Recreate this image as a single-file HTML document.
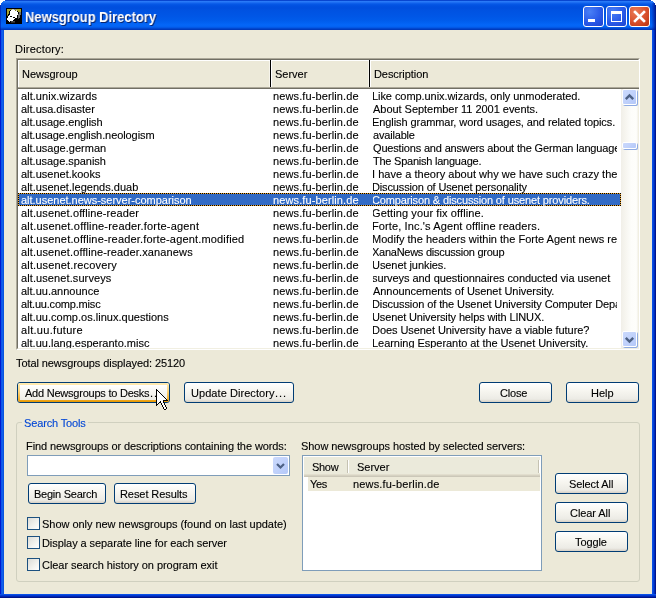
<!DOCTYPE html>
<html><head><meta charset="utf-8"><title>Newsgroup Directory</title>
<style>
html,body{margin:0;padding:0;background:#fff;}
body{width:656px;height:598px;overflow:hidden;position:relative;font-family:"Liberation Sans",sans-serif;font-size:11px;color:#000;line-height:13px;}
*{box-sizing:border-box;}
.abs{position:absolute;}
.t{position:absolute;white-space:nowrap;line-height:13px;height:13px;color:#000;will-change:transform;-webkit-text-stroke:0.12px currentColor;}
.t.w{color:#fff;}
.t.st{color:#0046d5;}
#win{position:absolute;left:0;top:0;width:656px;height:598px;background:#0855dd;overflow:hidden;}
#title{position:absolute;left:0;top:0;width:656px;height:30px;background:linear-gradient(180deg,#0846d0 0px,#0846d0 1px,#2d7ffa 1px,#2474f4 2px,#1466ee 3px,#0658e6 4px,#0050e0 6px,#004edd 8px,#0053e2 11px,#0056e6 16px,#005bea 20px,#0262f2 23px,#0467f8 25px,#0461f0 27px,#0250dc 28px,#0040c4 29px,#0034b4 30px);}
#ttext{position:absolute;transform-origin:0 0;font:bold 14px "Liberation Sans",sans-serif;color:#fff;text-shadow:1px 1px 0 #0a246a;white-space:nowrap;line-height:16px;will-change:transform;}
#bl{position:absolute;left:0;top:30px;width:4px;height:568px;background:linear-gradient(90deg,#0019cf 0,#0019cf 1px,#0a50e8 1px,#1263ee 3px,#0855dd 3px);}
#br{position:absolute;left:652px;top:30px;width:4px;height:568px;background:linear-gradient(90deg,#0a4fe4 0,#0a4fe4 1px,#0440d6 1px,#0440d6 2px,#002cbc 2px,#002cbc 3px,#00148e 3px);}
#bb{position:absolute;left:0;top:594px;width:656px;height:4px;background:linear-gradient(180deg,#0a50e6 0,#0a50e6 1px,#0238d2 1px,#0238d2 2px,#0026b2 2px,#0026b2 3px,#001388 3px);}
#client{position:absolute;left:4px;top:30px;width:648px;height:564px;background:#ece9d8;}
.cb{position:absolute;top:6px;width:21px;height:21px;border:1px solid #fff;border-radius:3px;}
.cbb{background:radial-gradient(circle at 30% 25%,#4a80f6 0%,#2a5ae8 55%,#1c42d0 100%);}
.cbr{background:radial-gradient(circle at 30% 25%,#ea7a56 0%,#d8502c 55%,#b8320e 100%);}
.btn{position:absolute;height:21px;border:1px solid #003c74;border-radius:3px;background:linear-gradient(180deg,#ffffff 0%,#f6f5ef 45%,#ecebe5 85%,#d6d0c5 100%);}
.btn.def::before{content:"";position:absolute;left:0;top:0;right:0;bottom:0;border-radius:2px;background:linear-gradient(180deg,#ffecb4 0%,#fdd47c 45%,#f3b030 85%,#e59700 100%);}
.btn.def::after{content:"";position:absolute;left:2px;top:2px;right:2px;bottom:2px;background:linear-gradient(180deg,#ffffff 0%,#f7f6f1 50%,#eeede6 100%);}
#list{position:absolute;left:16px;top:58px;width:624px;height:292px;border-top:1px solid #aca899;border-left:1px solid #aca899;border-right:1px solid #fff;border-bottom:1px solid #fff;}
#list2{position:absolute;left:0;top:0;width:622px;height:290px;border-top:1px solid #716f64;border-left:1px solid #716f64;border-right:1px solid #f1efe2;border-bottom:1px solid #f1efe2;background:#fff;overflow:hidden;}
#hdr{position:absolute;left:0;top:0;width:620px;height:29px;background:#ece9d8;border-top:1px solid #fff;border-bottom:1px solid #716f64;box-shadow:inset 0 -1px 0 #aca899;}
#rows{position:absolute;left:18px;top:89px;width:603px;height:259px;overflow:hidden;}
#selrow{position:absolute;left:0;top:104px;width:603px;height:13px;background:repeating-linear-gradient(90deg,#000 0 1px,#eda32c 1px 2px) 0 0/100% 1px no-repeat,repeating-linear-gradient(90deg,#000 0 1px,#eda32c 1px 2px) 0 100%/100% 1px no-repeat,repeating-linear-gradient(180deg,#000 0 1px,#eda32c 1px 2px) 0 0/1px 100% no-repeat,repeating-linear-gradient(180deg,#000 0 1px,#eda32c 1px 2px) 100% 0/1px 100% no-repeat,#316ac5;}
#dcol{position:absolute;left:355px;top:0;width:244px;height:259px;overflow:hidden;}
#sb{position:absolute;left:603px;top:29px;width:17px;height:259px;background:linear-gradient(90deg,#f1efe8 0%,#f6f5ef 25%,#fdfdfa 60%,#fefefb 90%,#f3f2ea 100%);}
.sbb{position:absolute;left:1px;width:15px;height:16px;border:1px solid #fff;border-radius:2px;background:linear-gradient(135deg,#cbd9fc 0%,#c1d2fb 50%,#b4c8f8 100%);box-shadow:1px 1px 0 #8fabe2;}
.grp{position:absolute;border:1px solid #d0d0bf;border-radius:3px;}
.chk{position:absolute;left:27px;width:13px;height:13px;border:1px solid #1c5180;background:linear-gradient(135deg,#dcdcd7 0%,#f3f3ef 60%,#ffffff 100%);}
#combo{position:absolute;left:27px;top:455px;width:263px;height:21px;border:1px solid #7f9db9;background:#fff;}
#slist{position:absolute;left:302px;top:455px;width:240px;height:116px;border:1px solid #7f9db9;background:#fff;}
</style></head><body>
<div id="win">
<div id="title"></div><div class="abs" style="left:652px;top:3px;width:4px;height:27px;background:linear-gradient(90deg,rgba(0,30,170,.15) 0,rgba(0,24,150,.55) 50%,rgba(0,14,120,.9) 100%)"></div><div class="abs" style="left:0;top:5px;width:1px;height:25px;background:rgba(0,20,160,.55)"></div>
<svg class="abs" style="left:0;top:0" width="8" height="8" shape-rendering="crispEdges"><path d="M0 0H5V1H3V2H2V3H1V5H0Z" fill="#fff"/></svg>
<svg class="abs" style="left:648px;top:0" width="8" height="8" shape-rendering="crispEdges"><path d="M8 0H3V1H5V2H6V3H7V5H8Z" fill="#fff"/></svg>
<svg class="abs" style="left:6px;top:8px" width="16" height="16" viewBox="0 0 16 16" shape-rendering="crispEdges"><rect width="16" height="16" fill="#000"/><rect x="1" y="1" width="5" height="1" fill="#a8a432"/><rect x="6" y="1" width="2" height="1" fill="#c8c8c8"/><rect x="8" y="1" width="2" height="1" fill="#888"/><rect x="10" y="1" width="5" height="1" fill="#a8a432"/><rect x="1" y="2" width="3" height="1" fill="#a8a432"/><rect x="5" y="2" width="4" height="1" fill="#fff"/><rect x="9" y="2" width="1" height="1" fill="#8a8a10"/><rect x="10" y="2" width="1" height="1" fill="#ddd"/><rect x="11" y="2" width="4" height="1" fill="#a8a432"/><rect x="1" y="3" width="2" height="1" fill="#a8a432"/><rect x="4" y="3" width="7" height="1" fill="#fff"/><rect x="12" y="3" width="3" height="1" fill="#a8a432"/><rect x="1" y="4" width="2" height="1" fill="#a8a432"/><rect x="4" y="4" width="8" height="1" fill="#fff"/><rect x="13" y="4" width="2" height="1" fill="#6e6e6e"/><rect x="1" y="5" width="2" height="1" fill="#a8a432"/><rect x="4" y="5" width="8" height="1" fill="#fff"/><rect x="13" y="5" width="2" height="1" fill="#6e6e6e"/><rect x="1" y="6" width="1" height="1" fill="#a8a432"/><rect x="4" y="6" width="8" height="1" fill="#fff"/><rect x="12" y="6" width="3" height="1" fill="#6e6e6e"/><rect x="1" y="7" width="1" height="1" fill="#6a6820"/><rect x="3" y="7" width="8" height="1" fill="#fff"/><rect x="12" y="7" width="2" height="1" fill="#6e6e6e"/><rect x="2" y="8" width="2" height="1" fill="#fff"/><rect x="6" y="8" width="5" height="1" fill="#fff"/><rect x="12" y="8" width="2" height="1" fill="#6e6e6e"/><rect x="2" y="9" width="5" height="1" fill="#fff"/><rect x="9" y="9" width="2" height="1" fill="#fff"/><rect x="12" y="9" width="2" height="1" fill="#6e6e6e"/><rect x="1" y="10" width="8" height="1" fill="#fff"/><rect x="12" y="10" width="1" height="1" fill="#4a4a4a"/><rect x="1" y="11" width="7" height="1" fill="#fff"/><rect x="2" y="12" width="5" height="1" fill="#fff"/><rect x="3" y="13" width="1" height="1" fill="#fff"/><rect x="5" y="13" width="4" height="1" fill="#4a4a4a"/><rect x="5" y="14" width="4" height="1" fill="#2a2a2a"/></svg>
<div id="ttext" style="left:24.5px;top:9px;transform:scaleX(0.926)">Newsgroup Directory</div>
<div class="cb cbb" style="left:583px"><div class="abs" style="left:4px;top:12px;width:7px;height:3px;background:#fff"></div></div>
<div class="cb cbb" style="left:606px"><div class="abs" style="left:4px;top:4px;width:11px;height:11px;border:1px solid #fff;border-top-width:3px"></div></div>
<div class="cb cbr" style="left:629px"><svg class="abs" style="left:0;top:0" width="19" height="19"><path d="M5 5L14 14M14 5L5 14" stroke="#fff" stroke-width="2.6" stroke-linecap="square"/></svg></div>
<div id="client"></div>
<div id="bl"></div><div id="br"></div><div id="bb"></div>

<div id="lDir" class="t" style="left:14.50px;top:43px;letter-spacing:0.200px">Directory:</div>

<div id="list"><div id="list2">
<div id="hdr"></div>
<div class="abs" style="left:0;top:0;width:1px;height:27px;background:#fff"></div>
<div class="abs" style="left:251px;top:1px;width:1px;height:26px;background:#f6f4ec"></div><div class="abs" style="left:252px;top:0;width:1px;height:27px;background:#000"></div><div class="abs" style="left:253px;top:1px;width:1px;height:26px;background:#fff"></div>
<div class="abs" style="left:350px;top:1px;width:1px;height:26px;background:#f6f4ec"></div><div class="abs" style="left:351px;top:0;width:1px;height:27px;background:#000"></div><div class="abs" style="left:352px;top:1px;width:1px;height:26px;background:#fff"></div>
<div id="sb">
<div class="sbb" style="top:0;height:16px"><svg class="abs" style="left:0;top:0" width="13" height="14"><path d="M2.8 9.2L6.5 5.5L10.2 9.2" stroke="#4d6185" stroke-width="2.4" fill="none"/></svg></div>
<div class="sbb" style="top:53px;height:7px"></div>
<div class="sbb" style="top:242px;height:16px"><svg class="abs" style="left:0;top:0" width="13" height="14"><path d="M2.8 5.8L6.5 9.5L10.2 5.8" stroke="#4d6185" stroke-width="2.4" fill="none"/></svg></div>
</div>
</div><div class="abs" style="left:621px;top:1px;width:1px;height:29px;background:#ece9d8;border-top:1px solid #fff;border-bottom:1px solid #716f64;box-shadow:inset 0 -1px 0 #aca899"></div></div>
<div id="hN" class="t" style="left:21.50px;top:68px;letter-spacing:0.000px">Newsgroup</div><div id="hS" class="t" style="left:274.50px;top:68px;letter-spacing:0.000px">Server</div><div id="hD" class="t" style="left:373.50px;top:68px;letter-spacing:-0.072px">Description</div>
<div id="rows">
<div id="selrow"></div>
<div id="n0" class="t" style="left:2.50px;top:1px;letter-spacing:0.048px">alt.unix.wizards</div>
<div id="s0" class="t" style="left:254.50px;top:1px;letter-spacing:0.113px">news.fu-berlin.de</div>
<div id="n1" class="t" style="left:2.50px;top:14px;letter-spacing:-0.012px">alt.usa.disaster</div>
<div id="s1" class="t" style="left:254.50px;top:14px;letter-spacing:0.113px">news.fu-berlin.de</div>
<div id="n2" class="t" style="left:2.50px;top:27px;letter-spacing:-0.056px">alt.usage.english</div>
<div id="s2" class="t" style="left:254.50px;top:27px;letter-spacing:0.113px">news.fu-berlin.de</div>
<div id="n3" class="t" style="left:2.50px;top:40px;letter-spacing:-0.083px">alt.usage.english.neologism</div>
<div id="s3" class="t" style="left:254.50px;top:40px;letter-spacing:0.113px">news.fu-berlin.de</div>
<div id="n4" class="t" style="left:2.50px;top:53px;letter-spacing:0.012px">alt.usage.german</div>
<div id="s4" class="t" style="left:254.50px;top:53px;letter-spacing:0.113px">news.fu-berlin.de</div>
<div id="n5" class="t" style="left:2.50px;top:66px;letter-spacing:-0.044px">alt.usage.spanish</div>
<div id="s5" class="t" style="left:254.50px;top:66px;letter-spacing:0.113px">news.fu-berlin.de</div>
<div id="n6" class="t" style="left:2.50px;top:79px;letter-spacing:0.000px">alt.usenet.kooks</div>
<div id="s6" class="t" style="left:254.50px;top:79px;letter-spacing:0.113px">news.fu-berlin.de</div>
<div id="n7" class="t" style="left:2.50px;top:92px;letter-spacing:0.025px">alt.usenet.legends.duab</div>
<div id="s7" class="t" style="left:254.50px;top:92px;letter-spacing:0.113px">news.fu-berlin.de</div>
<div id="n8" class="t w" style="left:2.50px;top:105px;letter-spacing:-0.016px">alt.usenet.news-server-comparison</div>
<div id="s8" class="t w" style="left:254.50px;top:105px;letter-spacing:0.113px">news.fu-berlin.de</div>
<div id="n9" class="t" style="left:2.50px;top:118px;letter-spacing:0.105px">alt.usenet.offline-reader</div>
<div id="s9" class="t" style="left:254.50px;top:118px;letter-spacing:0.113px">news.fu-berlin.de</div>
<div id="n10" class="t" style="left:2.50px;top:131px;letter-spacing:0.192px">alt.usenet.offline-reader.forte-agent</div>
<div id="s10" class="t" style="left:254.50px;top:131px;letter-spacing:0.113px">news.fu-berlin.de</div>
<div id="n11" class="t" style="left:2.50px;top:144px;letter-spacing:0.168px">alt.usenet.offline-reader.forte-agent.modified</div>
<div id="s11" class="t" style="left:254.50px;top:144px;letter-spacing:0.113px">news.fu-berlin.de</div>
<div id="n12" class="t" style="left:2.50px;top:157px;letter-spacing:0.130px">alt.usenet.offline-reader.xananews</div>
<div id="s12" class="t" style="left:254.50px;top:157px;letter-spacing:0.113px">news.fu-berlin.de</div>
<div id="n13" class="t" style="left:2.50px;top:170px;letter-spacing:0.160px">alt.usenet.recovery</div>
<div id="s13" class="t" style="left:254.50px;top:170px;letter-spacing:0.113px">news.fu-berlin.de</div>
<div id="n14" class="t" style="left:2.50px;top:183px;letter-spacing:0.096px">alt.usenet.surveys</div>
<div id="s14" class="t" style="left:254.50px;top:183px;letter-spacing:0.113px">news.fu-berlin.de</div>
<div id="n15" class="t" style="left:2.50px;top:196px;letter-spacing:0.000px">alt.uu.announce</div>
<div id="s15" class="t" style="left:254.50px;top:196px;letter-spacing:0.113px">news.fu-berlin.de</div>
<div id="n16" class="t" style="left:2.50px;top:209px;letter-spacing:-0.192px">alt.uu.comp.misc</div>
<div id="s16" class="t" style="left:254.50px;top:209px;letter-spacing:0.113px">news.fu-berlin.de</div>
<div id="n17" class="t" style="left:2.50px;top:222px;letter-spacing:0.012px">alt.uu.comp.os.linux.questions</div>
<div id="s17" class="t" style="left:254.50px;top:222px;letter-spacing:0.113px">news.fu-berlin.de</div>
<div id="n18" class="t" style="left:2.50px;top:235px;letter-spacing:0.300px">alt.uu.future</div>
<div id="s18" class="t" style="left:254.50px;top:235px;letter-spacing:0.113px">news.fu-berlin.de</div>
<div id="n19" class="t" style="left:2.50px;top:248px;letter-spacing:0.000px">alt.uu.lang.esperanto.misc</div>
<div id="s19" class="t" style="left:254.50px;top:248px;letter-spacing:0.113px">news.fu-berlin.de</div>
<div id="dcol">
<div id="d0" class="t" style="left:-1.50px;top:1px;letter-spacing:-0.063px">Like comp.unix.wizards, only unmoderated.</div>
<div id="d1" class="t" style="left:-0.50px;top:14px;letter-spacing:-0.036px">About September 11 2001 events.</div>
<div id="d2" class="t" style="left:-1.50px;top:27px;letter-spacing:-0.078px">English grammar, word usages, and related topics.</div>
<div id="d3" class="t" style="left:-0.50px;top:40px;letter-spacing:-0.181px">available</div>
<div id="d4" class="t" style="left:-0.50px;top:53px;letter-spacing:-0.168px">Questions and answers about the German language</div>
<div id="d5" class="t" style="left:-0.50px;top:66px;letter-spacing:-0.234px">The Spanish language.</div>
<div id="d6" class="t" style="left:-1.50px;top:79px;letter-spacing:0.031px">I have a theory about why we have such crazy theories</div>
<div id="d7" class="t" style="left:-1.50px;top:92px;letter-spacing:-0.145px">Discussion of Usenet personality</div>
<div id="d8" class="t w" style="left:-1.50px;top:105px;letter-spacing:-0.138px">Comparison &amp; discussion of usenet providers.</div>
<div id="d9" class="t" style="left:-1.50px;top:118px;letter-spacing:0.104px">Getting your fix offline.</div>
<div id="d10" class="t" style="left:-1.50px;top:131px;letter-spacing:0.117px">Forte, Inc.'s Agent offline readers.</div>
<div id="d11" class="t" style="left:-1.50px;top:144px;letter-spacing:0.010px">Modify the headers within the Forte Agent news reader</div>
<div id="d12" class="t" style="left:-1.50px;top:157px;letter-spacing:-0.262px">XanaNews discussion group</div>
<div id="d13" class="t" style="left:-1.50px;top:170px;letter-spacing:-0.064px">Usenet junkies.</div>
<div id="d14" class="t" style="left:-1.50px;top:183px;letter-spacing:-0.059px">surveys and questionnaires conducted via usenet</div>
<div id="d15" class="t" style="left:-0.50px;top:196px;letter-spacing:-0.053px">Announcements of Usenet University.</div>
<div id="d16" class="t" style="left:-1.50px;top:209px;letter-spacing:-0.095px">Discussion of the Usenet University Computer Department</div>
<div id="d17" class="t" style="left:-1.50px;top:222px;letter-spacing:-0.132px">Usenet University helps with LINUX.</div>
<div id="d18" class="t" style="left:-1.50px;top:235px;letter-spacing:-0.062px">Does Usenet University have a viable future?</div>
<div id="d19" class="t" style="left:-1.50px;top:248px;letter-spacing:-0.041px">Learning Esperanto at the Usenet University.</div>
</div>
</div>

<div id="lTot" class="t" style="left:15.50px;top:357px;letter-spacing:-0.084px">Total newsgroups displayed: 25120</div>

<div class="btn def" style="left:17px;top:382px;width:153px"></div><div id="bAdd" class="t" style="left:24.50px;top:387px;letter-spacing:-0.228px">Add Newsgroups to Desks</div><div id="bAdd2" class="t" style="left:149.50px;top:387px;letter-spacing:0.900px">...</div>
<div class="btn" style="left:184px;top:382px;width:110px"></div><div id="bUpd" class="t" style="left:190.50px;top:387px;letter-spacing:0.060px">Update Directory</div><div id="bUpd2" class="t" style="left:274.50px;top:387px;letter-spacing:0.900px">...</div>
<div class="btn" style="left:479px;top:382px;width:73px"></div><div id="bClose" class="t" style="left:500.00px;top:387px;letter-spacing:-0.188px">Close</div>
<div class="btn" style="left:566px;top:382px;width:73px"></div><div id="bHelp" class="t" style="left:590.50px;top:387px;letter-spacing:0.000px">Help</div>

<div class="grp" style="left:16px;top:422px;width:624px;height:160px"></div>
<div class="abs" style="left:22px;top:422px;width:66px;height:1px;background:#ece9d8"></div>
<div id="lST" class="t st" style="left:23.50px;top:417px;letter-spacing:-0.146px">Search Tools</div>

<div id="lFind" class="t" style="left:25.50px;top:440px;letter-spacing:-0.087px">Find newsgroups or descriptions containing the words:</div>
<div id="combo"><div class="abs" style="left:245px;top:1px;width:15px;height:17px;border-radius:2px;background:linear-gradient(135deg,#cbd9fc 0%,#c1d2fb 50%,#b4c8f8 100%)"><svg class="abs" style="left:0;top:1px" width="15" height="15"><path d="M4 6L7.5 9.5L11 6" stroke="#4d6185" stroke-width="2.2" fill="none"/></svg></div></div>
<div class="btn" style="left:28px;top:483px;width:78px"></div><div id="bBeg" class="t" style="left:34.00px;top:488px;letter-spacing:-0.246px">Begin Search</div>
<div class="btn" style="left:114px;top:483px;width:82px"></div><div id="bRes" class="t" style="left:120.00px;top:488px;letter-spacing:-0.075px">Reset Results</div>

<div class="chk" style="top:517px"></div><div id="c1" class="t" style="left:41.50px;top:518px;letter-spacing:-0.039px">Show only new newsgroups (found on last update)</div>
<div class="chk" style="top:536px"></div><div id="c2" class="t" style="left:41.50px;top:537px;letter-spacing:-0.071px">Display a separate line for each server</div>
<div class="chk" style="top:558px"></div><div id="c3" class="t" style="left:41.50px;top:559px;letter-spacing:-0.051px">Clear search history on program exit</div>

<div id="lShow" class="t" style="left:300.50px;top:440px;letter-spacing:-0.064px">Show newsgroups hosted by selected servers:</div>
<div id="slist">
<div class="abs" style="left:1px;top:1px;width:236px;height:20px;background:linear-gradient(180deg,#ebeadb 0,#ebeadb 17px,#e2dece 17px,#e2dece 18px,#d6d2c2 18px,#d6d2c2 19px,#cbc7b8 19px)"></div>
<div class="abs" style="left:44px;top:4px;width:1px;height:13px;background:#c5c2b2"></div><div class="abs" style="left:45px;top:4px;width:1px;height:13px;background:#fff"></div>
<div class="abs" style="left:235px;top:4px;width:1px;height:13px;background:#c5c2b2"></div><div class="abs" style="left:236px;top:4px;width:1px;height:13px;background:#fff"></div>
<div class="abs" style="left:5px;top:21px;width:232px;height:14px;background:#ece9d8"></div>
</div>
<div id="shShow" class="t" style="left:311.50px;top:461px;letter-spacing:-0.300px">Show</div><div id="shSrv" class="t" style="left:356.50px;top:461px;letter-spacing:0.000px">Server</div><div id="sYes" class="t" style="left:309.50px;top:478px;letter-spacing:-0.300px">Yes</div><div id="sSrv" class="t" style="left:353.00px;top:478px;letter-spacing:0.169px">news.fu-berlin.de</div>
<div class="btn" style="left:555px;top:473px;width:73px"></div><div id="bSel" class="t" style="left:568.50px;top:478px;letter-spacing:-0.100px">Select All</div>
<div class="btn" style="left:555px;top:502px;width:73px"></div><div id="bClr" class="t" style="left:570.00px;top:507px;letter-spacing:-0.068px">Clear All</div>
<div class="btn" style="left:555px;top:531px;width:73px"></div><div id="bTog" class="t" style="left:575.00px;top:536px;letter-spacing:-0.108px">Toggle</div>

<svg class="abs" style="left:156px;top:389px" width="12" height="21" viewBox="0 0 12 21" shape-rendering="crispEdges"><rect x="0" y="0" width="1" height="1" fill="#000"/><rect x="0" y="1" width="2" height="1" fill="#000"/><rect x="0" y="2" width="1" height="1" fill="#000"/><rect x="1" y="2" width="1" height="1" fill="#fff"/><rect x="2" y="2" width="1" height="1" fill="#000"/><rect x="0" y="3" width="1" height="1" fill="#000"/><rect x="1" y="3" width="2" height="1" fill="#fff"/><rect x="3" y="3" width="1" height="1" fill="#000"/><rect x="0" y="4" width="1" height="1" fill="#000"/><rect x="1" y="4" width="3" height="1" fill="#fff"/><rect x="4" y="4" width="1" height="1" fill="#000"/><rect x="0" y="5" width="1" height="1" fill="#000"/><rect x="1" y="5" width="4" height="1" fill="#fff"/><rect x="5" y="5" width="1" height="1" fill="#000"/><rect x="0" y="6" width="1" height="1" fill="#000"/><rect x="1" y="6" width="5" height="1" fill="#fff"/><rect x="6" y="6" width="1" height="1" fill="#000"/><rect x="0" y="7" width="1" height="1" fill="#000"/><rect x="1" y="7" width="6" height="1" fill="#fff"/><rect x="7" y="7" width="1" height="1" fill="#000"/><rect x="0" y="8" width="1" height="1" fill="#000"/><rect x="1" y="8" width="7" height="1" fill="#fff"/><rect x="8" y="8" width="1" height="1" fill="#000"/><rect x="0" y="9" width="1" height="1" fill="#000"/><rect x="1" y="9" width="8" height="1" fill="#fff"/><rect x="9" y="9" width="1" height="1" fill="#000"/><rect x="0" y="10" width="1" height="1" fill="#000"/><rect x="1" y="10" width="9" height="1" fill="#fff"/><rect x="10" y="10" width="1" height="1" fill="#000"/><rect x="0" y="11" width="1" height="1" fill="#000"/><rect x="1" y="11" width="6" height="1" fill="#fff"/><rect x="7" y="11" width="5" height="1" fill="#000"/><rect x="0" y="12" width="1" height="1" fill="#000"/><rect x="1" y="12" width="3" height="1" fill="#fff"/><rect x="4" y="12" width="1" height="1" fill="#000"/><rect x="5" y="12" width="2" height="1" fill="#fff"/><rect x="7" y="12" width="1" height="1" fill="#000"/><rect x="0" y="13" width="1" height="1" fill="#000"/><rect x="1" y="13" width="2" height="1" fill="#fff"/><rect x="3" y="13" width="2" height="1" fill="#000"/><rect x="5" y="13" width="2" height="1" fill="#fff"/><rect x="7" y="13" width="1" height="1" fill="#000"/><rect x="0" y="14" width="1" height="1" fill="#000"/><rect x="1" y="14" width="1" height="1" fill="#fff"/><rect x="2" y="14" width="1" height="1" fill="#000"/><rect x="5" y="14" width="1" height="1" fill="#000"/><rect x="6" y="14" width="2" height="1" fill="#fff"/><rect x="8" y="14" width="1" height="1" fill="#000"/><rect x="0" y="15" width="2" height="1" fill="#000"/><rect x="5" y="15" width="1" height="1" fill="#000"/><rect x="6" y="15" width="2" height="1" fill="#fff"/><rect x="8" y="15" width="1" height="1" fill="#000"/><rect x="0" y="16" width="1" height="1" fill="#000"/><rect x="6" y="16" width="1" height="1" fill="#000"/><rect x="7" y="16" width="2" height="1" fill="#fff"/><rect x="9" y="16" width="1" height="1" fill="#000"/><rect x="6" y="17" width="1" height="1" fill="#000"/><rect x="7" y="17" width="2" height="1" fill="#fff"/><rect x="9" y="17" width="1" height="1" fill="#000"/><rect x="7" y="18" width="1" height="1" fill="#000"/><rect x="8" y="18" width="2" height="1" fill="#fff"/><rect x="10" y="18" width="1" height="1" fill="#000"/><rect x="7" y="19" width="1" height="1" fill="#000"/><rect x="8" y="19" width="2" height="1" fill="#fff"/><rect x="10" y="19" width="1" height="1" fill="#000"/><rect x="8" y="20" width="2" height="1" fill="#000"/></svg>
</div>

</body></html>
